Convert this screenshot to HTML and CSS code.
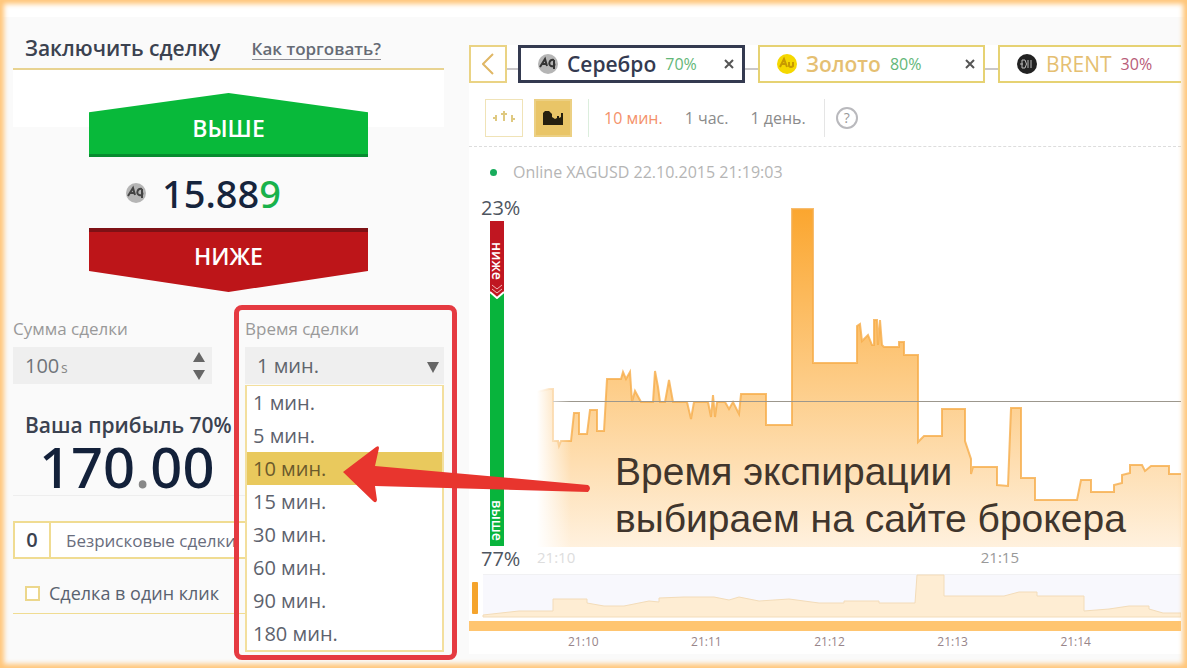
FILE: index.html
```html
<!DOCTYPE html>
<html lang="ru">
<head>
<meta charset="utf-8">
<meta name="viewport" content="width=device-width, initial-scale=1">
<title>Заключить сделку</title>
<link rel="stylesheet" href="styles.css">
</head>
<body>
<div class="page">
  <main class="layout">
    <section class="deal">
      <header class="deal-head">
        <h1 class="deal-title">Заключить сделку</h1>
        <a class="help-link" href="#help">Как торговать?</a>
      </header>
      <div class="trade">
        <button class="trade-btn up" type="button">ВЫШЕ</button>
        <div class="price">
          <svg class="coin" viewBox="0 0 20 20" aria-hidden="true"><circle cx="10" cy="10" r="10" fill="#b5b5b5"/><path d="M2 13 7 5l2 7M4 10h5M16 6c-5-1-6 5-3 6s4-1 3-3M16 6v9" fill="none" stroke="#444" stroke-width="2"/></svg>
          <span class="price-value">15.88<span class="price-last">9</span></span>
        </div>
        <button class="trade-btn down" type="button">НИЖЕ</button>
      </div>
      <div class="fields">
        <div class="field">
          <label class="field-label" for="sum">Сумма сделки</label>
          <div class="control">
            <input class="sum-input" id="sum" type="text" value="100"><span class="unit">s</span>
            <svg class="spin" viewBox="0 0 12 28" aria-hidden="true"><path d="M6 0l6 10H0zM6 28l6-10H0z" fill="#666"/></svg>
          </div>
        </div>
        <div class="field time-field">
          <label class="field-label" for="time">Время сделки</label>
          <div class="control">
            <select class="time-select" id="time"><option>1 мин.</option><option>5 мин.</option><option>10 мин.</option><option>15 мин.</option></select>
            <svg class="caret" viewBox="0 0 12 11" aria-hidden="true"><path d="M0 0h12L6 11z" fill="#666"/></svg>
          </div>
          <ul class="menu" role="listbox" aria-label="Время сделки">
            <li class="option" role="option">1 мин.</li>
            <li class="option" role="option">5 мин.</li>
            <li class="option active" role="option" aria-selected="true">10 мин.</li>
            <li class="option" role="option">15 мин.</li>
            <li class="option" role="option">30 мин.</li>
            <li class="option" role="option">60 мин.</li>
            <li class="option" role="option">90 мин.</li>
            <li class="option" role="option">180 мин.</li>
          </ul>
          <div class="highlight"></div>
          <svg class="arrow" viewBox="0 0 250 60" aria-hidden="true"><path d="M1 28 34 3q3-2 3 1l-4 18L246 41q4 3 0 7L33 42l2 14q-1 4-4 1z" fill="#e8352e"/></svg>
        </div>
      </div>
      <div class="profit">
        <div class="profit-title">Ваша прибыль 70%</div>
        <div class="profit-value">170<span class="dot">.</span>00</div>
      </div>
      <div class="riskfree"><span class="risk-count">0</span><span class="risk-text">Безрисковые сделки</span></div>
      <label class="oneclick" for="oneclick"><input class="check" id="oneclick" type="checkbox">Сделка в один клик</label>
    </section>

    <section class="market">
      <nav class="tabs">
        <button class="tab-back" type="button" aria-label="Назад"><svg class="chevron" viewBox="0 0 12 22"><path d="M11 1 1 11l10 10" fill="none" stroke="#e0b765" stroke-width="2"/></svg></button>
        <div class="tab selected">
          <svg class="coin" viewBox="0 0 20 20" aria-hidden="true"><circle cx="10" cy="10" r="10" fill="#b5b5b5"/><path d="M2 13 7 5l2 7M4 10h5M16 6c-5-1-6 5-3 6s4-1 3-3M16 6v9" fill="none" stroke="#333" stroke-width="2"/></svg>
          <span class="tab-name">Серебро</span><span class="rate">70%</span><button class="close" type="button" aria-label="Закрыть"><svg class="cross" viewBox="0 0 10 10"><path d="M1 1l8 8M9 1 1 9" stroke="#555" stroke-width="2"/></svg></button>
        </div>
        <div class="tab">
          <svg class="coin" viewBox="0 0 20 20" aria-hidden="true"><circle cx="10" cy="10" r="10" fill="#f5d800"/><path d="M3 13 7 5l3 8M4 10h5M12 8v4q2 2 4 0V8" fill="none" stroke="#c79a00" stroke-width="2"/></svg>
          <span class="tab-name">Золото</span><span class="rate">80%</span><button class="close" type="button" aria-label="Закрыть"><svg class="cross" viewBox="0 0 10 10"><path d="M1 1l8 8M9 1 1 9" stroke="#555" stroke-width="2"/></svg></button>
        </div>
        <div class="tab last">
          <svg class="coin" viewBox="0 0 20 20" aria-hidden="true"><circle cx="10" cy="10" r="10" fill="#222"/><path d="M5 6h3q3 4 0 8H5zM11 6v8M14 6v8M3 10h3" fill="none" stroke="#bbb"/></svg>
          <span class="tab-name">BRENT</span><span class="rate low">30%</span>
        </div>
      </nav>
      <div class="tools">
        <button class="tool" type="button" aria-label="Свечи"><svg class="tool-icon" viewBox="0 0 24 20"><path d="M4 7v6M12 3v10M20 7v7M1 10h3M9 6h6M20 11h3" stroke="#dfc981" stroke-width="2"/></svg></button>
        <button class="tool on" type="button" aria-label="График"><svg class="tool-icon" viewBox="0 0 24 20"><path d="M2 17V5l2-2h4l3 3v3l3 2 2-1v-2h2v2l2-1V5h2v12z" fill="#26200f"/></svg></button>
        <div class="periods">
          <button class="period current" type="button">10 мин.</button>
          <button class="period" type="button">1 час.</button>
          <button class="period" type="button">1 день.</button>
        </div>
        <button class="question" type="button" aria-label="Справка">?</button>
      </div>
      <div class="online"><span class="online-dot"></span>Online XAGUSD 22.10.2015 21:19:03</div>
      <div class="board">
        <div class="gauge">
          <span class="gauge-value">23%</span>
          <div class="gauge-bar">
            <div class="gauge-down">ниже<svg class="gauge-tip" viewBox="0 0 14 15" aria-hidden="true"><path d="M2 1l5 4 5-4M2 5l5 4 5-4" fill="none" stroke="#f2b9b9"/><path d="M0 8l7 6 7-6v7H0z" fill="#08b43c"/><path d="M0 8l7 6 7-6" fill="none" stroke="#fff" stroke-width="2"/></svg></div>
            <div class="gauge-up">выше</div>
          </div>
          <span class="gauge-value">77%</span>
        </div>
        <div class="plot">
          <svg class="series" viewBox="0 0 644 352" preserveAspectRatio="none" role="img" aria-label="График XAGUSD">
            <defs>
              <linearGradient id="fill" x1="0" y1="0" x2="0" y2="1"><stop offset="0" stop-color="#fba62f"/><stop offset=".5" stop-color="#fdcb84"/><stop offset="1" stop-color="#fff1de"/></linearGradient>
              <linearGradient id="fade" x1="0" y1="0" x2="1" y2="0"><stop offset="0" stop-color="#fff"/><stop offset="1" stop-color="#fff" stop-opacity="0"/></linearGradient>
            </defs>
            <path d="M0 207V197L12 194H16V246H21L22 251L24 246H34L37 218H42V239H50L53 215H60V236H67L70 184H84L86 177L89 184L93 177L95 207L98 196L104 207H116L118 176L121 192L123 207H128L132 185L136 207H150L154 224L157 207H171L174 222L176 200L178 222L180 207H188L192 214L196 207L202 219L204 199H229V230H255V14H276V168H320V131L323 129L325 146L331 140L335 150H337V125H340L341 150L343 125L345 150L347 152H362V147H367V160H381V247L387 241H405V214H428V246L434 264V279L436 272H460V290L471 291L474 213H484V283H498V305H540L544 285H554V297H577V290L585 288V280L593 278V270H605L608 276L614 271H632V279H644V352H0Z" fill="url(#fill)"/>
            <path d="M0 197L12 194H16V246H21L22 251L24 246H34L37 218H42V239H50L53 215H60V236H67L70 184H84L86 177L89 184L93 177L95 207L98 196L104 207H116L118 176L121 192L123 207H128L132 185L136 207H150L154 224L157 207H171L174 222L176 200L178 222L180 207H188L192 214L196 207L202 219L204 199H229V230H255V14H276V168H320V131L323 129L325 146L331 140L335 150H337V125H340L341 150L343 125L345 150L347 152H362V147H367V160H381V247L387 241H405V214H428V246L434 264V279L436 272H460V290L471 291L474 213H484V283H498V305H540L544 285H554V297H577V290L585 288V280L593 278V270H605L608 276L614 271H632V279H644" fill="none" stroke="#f6ad4a" stroke-width="2" stroke-opacity=".8" vector-effect="non-scaling-stroke"/>
            <path d="M16 206.500H644" stroke="#9c978d" vector-effect="non-scaling-stroke"/>
            <path d="M0 180H34V352H0Z" fill="url(#fade)"/>
          </svg>
          <div class="axis"><span class="tick faint">21:10</span><span class="tick">21:15</span></div>
          <p class="note">Время экспирации<br>выбираем на сайте брокера</p>
        </div>
      </div>
      <div class="overview">
        <svg class="mini" viewBox="0 0 712 44" preserveAspectRatio="none" aria-hidden="true">
          <path d="M14 0H712" stroke="#e4e4e8" vector-effect="non-scaling-stroke"/>
          <path d="M14 1H712V43H14Z" fill="#f8f8fd"/>
          <path d="M14 41 50 37H84V25H118V29L135 32H155L180 27L190 28V24L215 23H245L260 26L270 23L290 27L320 25L350 29H375V27H410V29H446L448 1H475V22H535L550 18H568V22H615V37L640 35L660 32H680V35L694 39H712V43H14Z" fill="#feedd3" stroke="#f3dcb9" vector-effect="non-scaling-stroke"/>
          <rect x="3" y="8" width="6" height="32" rx="1" fill="#f5a42c"/>
        </svg>
        <div class="scroll"></div>
        <div class="mini-axis"><span>21:10</span><span>21:11</span><span>21:12</span><span>21:13</span><span>21:14</span></div>
      </div>
    </section>
  </main>
</div>
</body>
</html>
```
FILE: styles.css
```css
* { box-sizing: border-box; }

body {
  margin: 0;
  font-family: "Open Sans", "Noto Sans", sans-serif;
  color: #3b4250;
}

button, input, select { font: inherit; color: inherit; border: 0; padding: 0; background: none; }
button { cursor: pointer; }
svg { display: block; flex: none; }

.page {
  position: relative;
  min-height: 100vh;
  background: linear-gradient(#fff 17px, #fafafa 17px);
  padding: 17px 6px 6px 13px;
  overflow: hidden;
}
.page::after {
  content: "";
  position: absolute;
  inset: 0;
  box-shadow: inset 0 0 5px 4px #ffc67a;
  pointer-events: none;
}

.layout { display: grid; grid-template-columns: 431px minmax(0, 1fr); gap: 25px; }

/* Deal form */
.deal-head {
  display: flex;
  align-items: center;
  gap: 31px;
  height: 53px;
  padding: 10px 12px 0;
  border-bottom: 2px solid #e8d391;
}
.deal-title { margin: 0; font-size: 21px; line-height: 30px; font-weight: 600; }
.help-link {
  margin-top: 4px;
  font-size: 17px;
  line-height: 20px;
  font-weight: 600;
  color: #666b75;
  text-decoration: none;
  border-bottom: 1px solid #8d8d94;
}

.trade {
  display: flex;
  flex-direction: column;
  align-items: center;
  padding-top: 23px;
  background: linear-gradient(#fff 57px, #fafafa 57px);
}
.trade-btn { width: 279px; height: 64px; color: #fff; font-size: 23px; line-height: 30px; font-weight: 600; }
.up {
  padding-top: 6px;
  background: linear-gradient(#08b93a 61px, #078c30 61px);
  clip-path: polygon(0 30%, 50% 0, 100% 30%, 100% 100%, 0 100%);
}
.down {
  padding-bottom: 8px;
  background: linear-gradient(#7e1115 4px, #bd1519 4px);
  clip-path: polygon(0 0, 100% 0, 100% 67%, 50% 100%, 0 67%);
}
.price { display: flex; align-items: center; gap: 16px; width: 279px; height: 71px; padding-left: 37px; }
.coin { width: 20px; height: 20px; }
.price-value { font-family: "Noto Sans", "Open Sans", sans-serif; font-size: 38px; line-height: 48px; font-weight: 500; color: #16243c; }
.price-last { color: #18b24b; }

.fields { display: grid; grid-template-columns: 199px 199px; justify-content: space-between; padding-top: 25px; }
.field-label { display: block; font-size: 17px; line-height: 24px; color: #999; padding-bottom: 6px; }
.control { position: relative; display: flex; align-items: center; height: 37px; padding: 0 7px 0 12px; background: #efefef; color: #70747a; }
.sum-input { width: 36px; font-size: 20px; line-height: 28px; }
.unit { font-size: 14px; padding-top: 4px; color: #888; }
.spin { width: 12px; height: 28px; margin-left: auto; }
.time-field { position: relative; z-index: 1; }
.time-select { appearance: none; width: 100%; font-size: 20px; line-height: 28px; color: #60656c; }
.caret { position: absolute; right: 5px; top: 15px; width: 12px; height: 11px; pointer-events: none; }

.menu {
  position: absolute;
  top: 68px;
  left: 0;
  right: 0;
  margin: 0;
  padding: 0;
  list-style: none;
  background: #fff;
  border: 2px solid #f3df9d;
  border-top-width: 1px;
}
.option { padding: 0 6px; font-size: 20px; line-height: 33px; color: #5d626d; }
.option.active { background: #e9c95d; color: #6b5a2c; }

.highlight {
  position: absolute;
  top: -12px;
  left: -11px;
  right: -13px;
  height: 355px;
  border: 5px solid #e53a41;
  border-radius: 8px;
}
.arrow { position: absolute; top: 127px; left: 97px; width: 250px; height: 60px; pointer-events: none; }

.profit { height: 112px; padding: 29px 12px 0; border-bottom: 1px solid #eee; }
.profit-title { font-size: 21px; line-height: 24px; font-weight: 600; white-space: nowrap; }
.profit-value { padding-left: 14px; font-family: "Noto Sans", "Open Sans", sans-serif; font-size: 56px; line-height: 58px; font-weight: 500; color: #13213a; }
.dot { color: #888; }

.riskfree { display: flex; align-items: center; height: 38px; margin-top: 25px; border: 2px solid #f0dc92; background: #fff; }
.risk-count { width: 36px; text-align: center; font-size: 20px; line-height: 34px; font-weight: 600; border-right: 2px solid #f0dc92; }
.risk-text { padding-left: 15px; font-size: 17px; color: #696d7d; white-space: nowrap; }

.oneclick {
  display: flex;
  align-items: center;
  gap: 9px;
  height: 55px;
  padding: 14px 12px 0;
  border-bottom: 1px solid #f0dc92;
  font-size: 18px;
  color: #596270;
}
.check { appearance: none; width: 15px; height: 15px; margin: 0; border: 2px solid #ecd78c; background: #fff; }

/* Market panel */
.market { min-width: 0; background: linear-gradient(#fafafa 28px, #fff 28px); padding-top: 28px; }
.tabs { display: flex; height: 38px; overflow: hidden; background: linear-gradient(#0000 23px, #c9c7c9 23px, #c9c7c9 25px, #0000 25px); }
.tab-back { display: grid; place-items: center; width: 38px; margin-right: 11px; border: 2px solid #ead384; background: #fff; flex: none; }
.chevron { width: 12px; height: 22px; }
.tab {
  display: flex;
  align-items: center;
  gap: 9px;
  flex: none;
  width: 227px;
  margin-right: 13px;
  padding: 0 8px 0 17px;
  border: 2px solid #e6d273;
  background: #fff;
  color: #e5bf72;
}
.tab.selected { border: 3px solid #343a50; color: #343a50; }
.tab.last { flex: 1 0 0; border-right: 0; margin-right: 0; padding-right: 0; }
.tab-name { font-size: 21px; line-height: 30px; font-weight: 600; }
.tab.last .tab-name { font-weight: 500; }
.rate { font-size: 16px; color: #63b778; }
.rate.low { color: #b85c78; }
.close { margin-left: auto; }
.cross { width: 10px; height: 10px; }

.tools { display: flex; align-items: center; gap: 11px; height: 64px; padding: 6px 16px 0; border-bottom: 1px dashed #ddd; }
.tool { display: grid; place-items: center; width: 38px; height: 38px; border: 1px solid #f0e3b7; background: #fff; }
.tool.on { border: 2px solid #ecd083; background: #e9c567; }
.tool-icon { width: 24px; height: 20px; }
.periods { display: flex; align-items: center; gap: 22px; height: 38px; margin-left: 5px; padding: 0 18px 0 15px; border-left: 1px solid #dceedd; border-right: 1px solid #e5e5e5; }
.period { font-size: 16px; line-height: 24px; color: #8b8b8b; }
.period.current { color: #f4916a; }
.question { width: 22px; height: 22px; border: 2px solid #b9b9bd; border-radius: 50%; font-size: 14px; line-height: 18px; color: #999; }

.online { display: flex; align-items: center; gap: 16px; height: 48px; padding: 2px 0 0 21px; font-size: 16px; color: #b5b5b5; white-space: nowrap; }
.online-dot { width: 7px; height: 7px; border-radius: 50%; background: #18ac5c; }

.board { display: grid; grid-template-columns: 68px minmax(0, 1fr); }
.gauge { display: flex; flex-direction: column; padding-left: 12px; }
.gauge-value { font-size: 20px; line-height: 26px; font-weight: 500; color: #4e5560; }
.gauge-bar { display: flex; flex-direction: column; width: 14px; height: 325px; margin-left: 9px; background: #08b43c; color: #fff; font-size: 14px; line-height: 14px; font-weight: 600; }
.gauge-down { display: flex; align-items: center; justify-content: flex-end; gap: 4px; height: 78px; background: #c01621; writing-mode: vertical-rl; }
.gauge-tip { width: 14px; height: 15px; }
.gauge-up { flex: 1; writing-mode: vertical-rl; text-align: right; padding-bottom: 5px; }
.plot { position: relative; }
.series { width: 100%; height: 352px; }
.axis { display: flex; justify-content: space-between; padding-right: 162px; font-size: 15px; line-height: 20px; color: #999; }
.faint { color: #ddd; }
.note {
  position: absolute;
  top: 253px;
  left: 78px;
  margin: 0;
  font-family: "Liberation Sans", Arial, sans-serif;
  font-size: 39px;
  line-height: 47px;
  color: #40352c;
  white-space: nowrap;
}

.overview { padding-top: 2px; }
.mini { width: 100%; height: 44px; }
.scroll { height: 10px; margin-top: 3px; background: #ffc570; }
.mini-axis { display: flex; justify-content: space-between; padding: 4px 90px 5px 99px; font-size: 12px; line-height: 14px; color: #98858a; }
```
